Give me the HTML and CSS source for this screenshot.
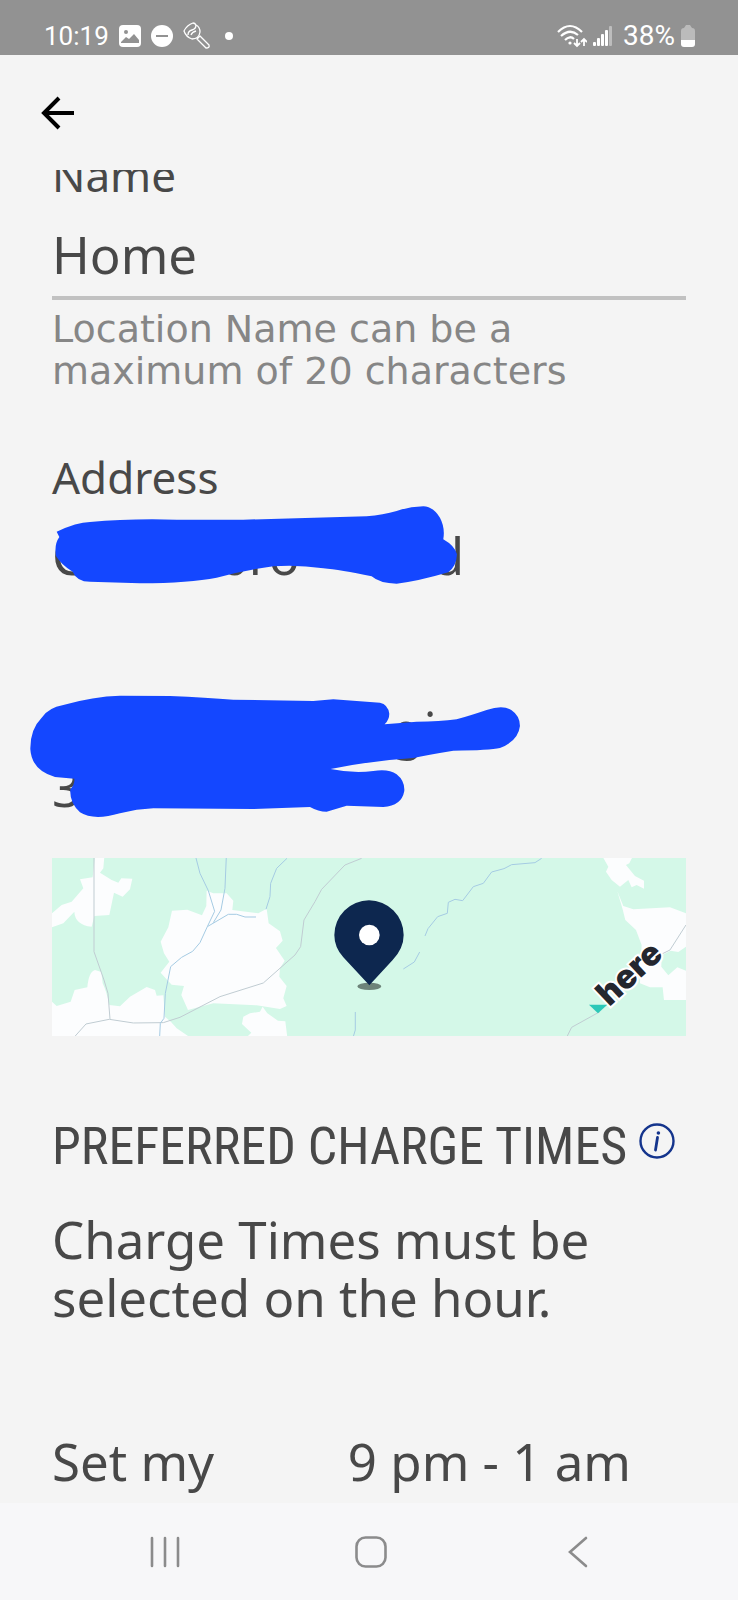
FILE: index.html
```
<!DOCTYPE html>
<html lang="en">
<head>
    <meta charset="UTF-8">
    <meta name="viewport" content="width=device-width, initial-scale=1.0">
    <title>Charge Location</title>
    <link rel="stylesheet" href="styles.css">
</head>
<body>
    <header class="status-bar">
        <div class="status-group">
            <span>10:19</span>
            <svg width="22" height="22" viewBox="0 0 22 22">
                <rect width="22" height="22" rx="4" fill="#fff"/>
                <circle cx="7" cy="7" r="2" fill="#929292"/>
                <path d="M2 17 L7 12 L10 14 L15 9 L20 15 V18 H2 Z" fill="#929292"/>
            </svg>
            <svg width="22" height="22" viewBox="0 0 22 22">
                <circle cx="11" cy="11" r="11" fill="#fff"/>
                <path d="M5 11 H17" stroke="#929292" stroke-width="2"/>
            </svg>
            <svg width="28" height="28" viewBox="0 0 28 28" fill="none" stroke="#fff" stroke-width="1.3" stroke-linejoin="round">
                <path d="M1 9 Q4 3 10 1 Q12 1 13 3 Q17 5 17 10 Q16 17 9 17 Q3 15 1 9 Z"/>
                <path d="M5 13 Q5 9 9 8 Q13 7 13 3 M8 13 Q9 10 13 9 M14 17 L17 14 L26 23 Q27 26 23 26 Z"/>
            </svg>
            <span class="dot"></span>
        </div>
        <div class="status-group status-right">
            <svg width="30" height="24" viewBox="0 0 30 24" fill="none" stroke="#fff" stroke-width="2.2">
                <path d="M1 8 Q13 -4 25 8 M4 12 Q13 4 21 11 M8 16 Q13 11 17 15"/>
                <circle cx="13" cy="19" r="1.6" fill="#fff" stroke="none"/>
                <path d="M20 15 V22 M17 19 L20 22 L23 19 M27 22 V15 M24 18 L27 15 L30 18" stroke-width="1.8"/>
            </svg>
            <svg width="20" height="22" viewBox="0 0 20 22" fill="#fff">
                <rect x="0" y="17" width="3" height="4" rx="1"/>
                <rect x="4" y="13" width="3" height="8" rx="1"/>
                <rect x="8" y="9" width="3" height="12" rx="1"/>
                <rect x="12" y="5" width="3" height="16" rx="1"/>
                <rect x="16" y="1" width="3" height="20" rx="1" opacity=".4"/>
            </svg>
            <span class="battery-text">38%</span>
            <svg width="14" height="22" viewBox="0 0 14 22">
                <path d="M3 3 L5 0 H9 L11 3 Q14 3 14 6 V15 H0 V6 Q0 3 3 3 Z" fill="#bbb"/>
                <path d="M0 15 H14 V19 Q14 22 11 22 H3 Q0 22 0 19 Z" fill="#fff"/>
            </svg>
        </div>
    </header>

    <div class="app-bar">
        <button class="back" type="button" aria-label="Back">
            <svg width="34" height="34" viewBox="0 0 34 34" fill="none" stroke="#000" stroke-width="4">
                <path d="M33 17 H3 M18 2 L3 17 L18 32"/>
            </svg>
        </button>
    </div>

    <main class="content">
        <label class="label name-label" for="name">Name</label>
        <input class="name-input" type="text" id="name" value="Home">
        <p class="hint">Location Name can be a maximum of 20 characters</p>

        <h2 class="label address-label">Address</h2>
        <div class="address">
            <p class="street"><span>C</span><span>bro</span><span>d</span></p>
            <p class="city"><span>g</span><span>i</span></p>
            <p>3</p>
            <svg class="marker" width="540" height="340" viewBox="0 0 540 340" fill="#1447ff">
                <path transform="translate(10 0) scale(.3333)" d="M80 122 Q140 94 180 93 Q300 82 440 86 L640 86 L800 82 L1010 76 Q1060 72 1100 60 Q1140 46 1180 46 Q1210 47 1230 80 Q1246 110 1240 145 Q1275 165 1281 190 Q1280 225 1255 244 Q1160 272 1100 278 Q1050 278 1025 256 Q930 236 880 232 Q800 220 730 226 Q640 238 560 260 Q480 276 330 277 L180 272 Q140 272 128 242 Q94 222 78 195 Q72 160 88 138 Z"/>
                <path transform="translate(0 190) scale(.3333)" d="M300 44 L450 45 Q560 50 640 56 L880 60 L940 55 L1080 65 Q1104 70 1108 98 Q1108 116 1094 130 L1190 122 Q1260 122 1310 115 Q1350 104 1400 87 Q1450 70 1475 88 Q1500 105 1500 135 Q1495 180 1440 201 Q1410 208 1300 209 Q1220 222 1180 231 Q1060 238 932 264 Q1000 278 1060 270 Q1105 262 1130 280 Q1155 300 1153 330 Q1145 375 1090 378 L980 374 L920 392 Q895 392 870 378 L700 384 L400 382 Q350 384 300 397 Q220 420 180 394 Q148 365 151 325 Q165 310 163 293 L105 288 Q35 268 31 205 Q30 145 65 110 Q85 80 130 72 Q220 46 300 44 Z"/>
            </svg>
        </div>

        <svg class="map" viewBox="0 0 634 178" role="img" aria-label="Map">
            <rect width="634" height="178" fill="#d4f8e8"/>
            <g transform="translate(-12 -8) scale(.3333)" fill="#fcfdfe">
                <path d="M165 20 H193 L190 55 L180 68 L215 90 L235 98 L244 85 L277 86 L270 118 L248 140 L222 128 L208 195 L163 198 L155 230 Q105 225 103 185 L70 220 L36 232 V190 L65 165 L95 155 L130 115 L120 88 L158 82 Z"/>
                <path d="M36 455 L50 468 L92 455 L104 420 L142 412 Q146 366 165 360 L184 366 L188 400 Q200 425 208 465 L240 469 L270 440 L320 411 L345 420 L350 437 L370 436 L375 500 Q395 515 410 535 L450 562 H36 Z"/>
                <path d="M396 182 L442 179 L486 196 L499 168 L500 122 L520 130 L560 130 L580 152 L577 180 L655 190 L680 176 L686 220 L720 244 L728 272 L708 294 L734 332 L720 355 L718 380 L740 408 L730 445 L740 468 L720 477 L650 466 L520 460 L444 480 L424 435 L432 408 L395 404 L382 390 L362 368 L388 335 L372 310 L362 275 L385 232 Z"/>
                <path d="M630 490 L660 485 L668 470 L682 490 L714 512 L736 514 L742 562 H620 L634 548 L606 522 L610 500 Z"/>
            </g>
            <g transform="translate(308 -8) scale(.3333)" fill="#fcfdfe">
                <path d="M728 20 H818 L808 40 L798 45 L825 78 L852 92 V116 L830 105 L815 112 L805 90 L780 110 L755 90 L738 65 L745 50 Z"/>
                <path d="M772 124 L790 168 L820 178 L930 172 L978 190 V290 L955 306 L932 302 L905 316 L904 350 L925 376 L952 352 L978 362 V450 H912 L908 412 L870 412 L840 400 L845 285 L828 240 L796 210 L788 178 Z"/>
            </g>
            <g transform="translate(-12 -8) scale(.3333)" fill="none" stroke="#c0ccd2" stroke-width="3">
                <path d="M162 20 V305 L192 390 L204 430 L210 507 M104 560 L138 522 L208 508 L280 519 L370 518 L420 502 L540 440 L670 399 L765 315 L782 290 L792 210 L825 155 L845 118 L915 45 L965 25"/>
            </g>
            <g transform="translate(-12 -8) scale(.3333)" fill="none" stroke="#a5cbe3" stroke-width="3">
                <path d="M467 20 L480 70 L505 122 L524 184 L502 230 L480 278 L458 304 L425 322 L392 350 L376 430 L372 505 L361 520 L359 560 M559 20 L555 115 L543 180 L520 218 M502 230 L565 193 L590 193 L615 201 H648 M741 25 L710 55 L692 100 L690 140 L678 178 M946 486 V540 L940 560"/>
            </g>
            <g transform="translate(308 -8) scale(.3333)" fill="none" stroke="#a5cbe3" stroke-width="3">
                <path d="M545 25 L525 38 L455 44 L432 56 L395 66 L370 100 L340 110 L308 152 L285 148 L265 157 L262 190 L233 200 L204 236 L195 258 M179 306 L163 336 L130 357"/>
                <path stroke="#c0ccd2" d="M978 225 L930 300 L880 325 M720 485 L635 532 L622 558"/>
            </g>
            <g transform="translate(308 -8) scale(.3333)">
                <ellipse cx="28" cy="409" rx="36" ry="11" fill="#6d8379"/>
                <path d="M28 406 L-50 322 Q-77 292 -77 255 A104 104 0 0 1 131 255 Q131 295 98 330 Z" fill="#0d274f"/>
                <circle cx="28" cy="255" r="31" fill="#fff"/>
                <text class="here" transform="translate(748 472) rotate(-43)">here</text>
                <path d="M687 464 H742 L714 490 Z" fill="#2cc8b8"/>
            </g>
        </svg>

        <div class="section-head">
            <h2 class="section-title">PREFERRED CHARGE TIMES</h2>
            <button class="info" type="button" aria-label="About preferred charge times">
                <svg width="36" height="36" viewBox="0 0 36 36" fill="none" stroke="#14348c" stroke-width="2.4">
                    <circle cx="18" cy="18" r="16.5"/>
                    <path d="M18.5 14.5 L16.5 27" stroke-width="2.8" stroke-linecap="round"/>
                    <circle cx="19.4" cy="10" r="1.8" fill="#14348c" stroke="none"/>
                </svg>
            </button>
        </div>
        <p>Charge Times must be selected on the hour.</p>

        <div class="times">
            <span>Set my</span>
            <span>9 pm - 1 am</span>
        </div>
    </main>

    <nav class="nav-bar">
        <button type="button" aria-label="Recent apps">
            <svg width="32" height="32" viewBox="0 0 32 32" fill="none" stroke="#8b8b8c" stroke-width="2.6" stroke-linecap="round">
                <path d="M3 2 V30 M16 2 V30 M29 2 V30"/>
            </svg>
        </button>
        <button type="button" aria-label="Home">
            <svg width="32" height="32" viewBox="0 0 32 32" fill="none" stroke="#8b8b8c" stroke-width="2.6">
                <rect x="1.5" y="1.5" width="29" height="29" rx="9"/>
            </svg>
        </button>
        <button type="button" aria-label="Back">
            <svg width="32" height="32" viewBox="0 0 32 32" fill="none" stroke="#8b8b8c" stroke-width="2.6" stroke-linecap="round">
                <path d="M25 2 L9 16 L25 30"/>
            </svg>
        </button>
    </nav>
</body>
</html>
```
FILE: styles.css
```
* {
    box-sizing: border-box;
}

body {
    display: flex;
    flex-direction: column;
    height: 100vh;
    margin: 0;
    background-color: #f4f4f4;
    color: #484848;
    font-family: "Noto Sans", sans-serif;
    font-size: 51px;
    line-height: 58px;
}

h2, p {
    margin: 0;
}

button {
    padding: 0;
    border: none;
    background: none;
    cursor: pointer;
}

svg {
    display: block;
}

.status-bar {
    display: flex;
    justify-content: space-between;
    align-items: center;
    height: 55px;
    flex-shrink: 0;
    padding: 16px 43px 0 44px;
    background-color: #929292;
    color: #fff;
    font-family: Roboto, sans-serif;
    font-size: 26px;
    line-height: 32px;
}

.status-group {
    display: flex;
    align-items: center;
    gap: 10px;
}

.status-right {
    gap: 6px;
}

.battery-text {
    padding-left: 4px;
    font-size: 28px;
}

.dot {
    width: 8px;
    height: 8px;
    margin-left: 4px;
    border-radius: 50%;
    background-color: #fff;
}

.app-bar {
    display: flex;
    align-items: center;
    height: 115px;
    flex-shrink: 0;
    padding: 0 41px;
}

.content {
    flex: 1;
    min-height: 0;
    padding: 0 52px;
    overflow: hidden;
}

.label {
    display: block;
    font-size: 44px;
    font-weight: normal;
}

.name-label {
    margin-top: -24px;
}

.name-input {
    display: block;
    width: 100%;
    height: 96px;
    padding: 20px 0 12px;
    border: none;
    border-bottom: 4px solid #c1c1c1;
    border-radius: 0;
    outline: none;
    background: none;
    color: inherit;
    font: inherit;
}

.hint {
    margin-top: 8px;
    padding-right: 80px;
    color: #868686;
    font-family: "DejaVu Sans", sans-serif;
    font-size: 38px;
    line-height: 42px;
}

.address-label {
    margin-top: 56px;
}

.address {
    position: relative;
    margin-top: 20px;
}

.street {
    display: flex;
    justify-content: space-between;
    width: 412px;
    margin-bottom: 116px;
}

.city {
    display: flex;
    padding-left: 340px;
}

.marker {
    position: absolute;
    top: -35px;
    left: -32px;
}

.map {
    width: 100%;
    margin-top: 42px;
}

.here {
    fill: #24272f;
    stroke: #fff;
    stroke-width: 12px;
    paint-order: stroke;
    font-family: Inter, sans-serif;
    font-size: 100px;
    font-weight: 900;
}

.section-head {
    display: flex;
    align-items: flex-start;
    gap: 12px;
    margin-top: 82px;
    margin-bottom: 34px;
}

.section-title {
    font-family: "Roboto Condensed", "Open Sans Condensed", sans-serif;
    font-size: 52px;
    font-weight: 400;
    white-space: nowrap;
}

.info {
    margin-top: 5px;
}

.times {
    display: grid;
    grid-template-columns: 7fr 8fr;
    margin-top: 106px;
}

.nav-bar {
    display: grid;
    grid-template-columns: repeat(3, 1fr);
    align-items: center;
    justify-items: center;
    height: 97px;
    flex-shrink: 0;
    padding: 0 58px 0 62px;
    background-color: #f7f7f9;
}
```
